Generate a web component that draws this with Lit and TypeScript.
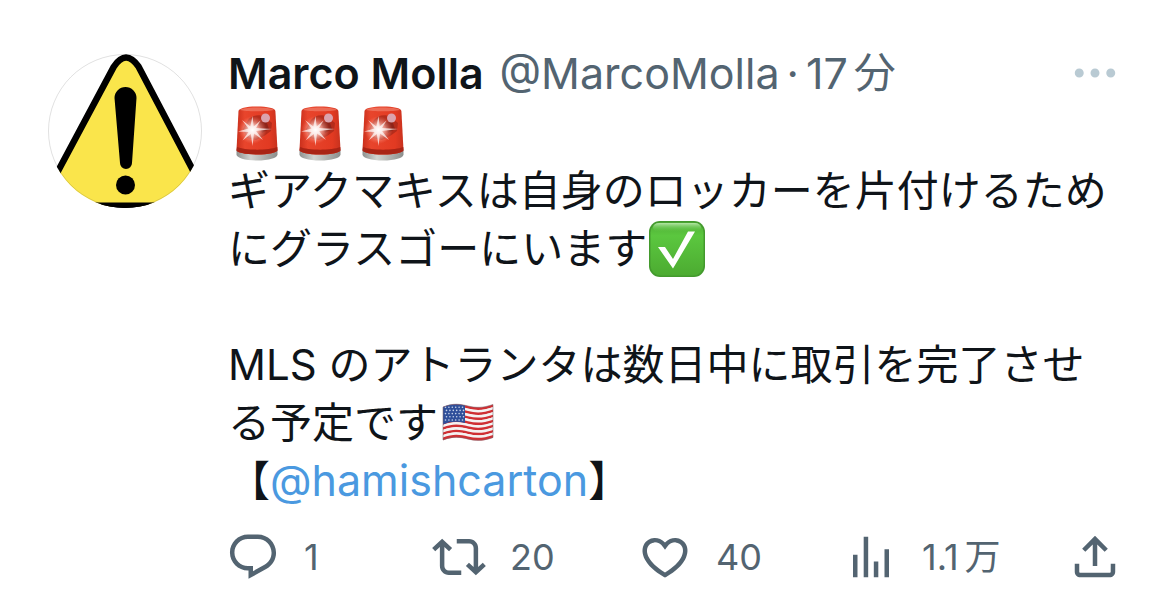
import { LitElement, html, css, svg } from "lit";
import { customElement, property } from "lit/decorators.js";

const ICONS: Record<string, string> = {
  more: "M3 12c0-1.1.9-2 2-2s2 .9 2 2-.9 2-2 2-2-.9-2-2zm9 2c1.1 0 2-.9 2-2s-.9-2-2-2-2 .9-2 2 .9 2 2 2zm7 0c1.1 0 2-.9 2-2s-.9-2-2-2-2 .9-2 2 .9 2 2 2z",
  reply:
    "M1.751 10c0-4.42 3.584-8 8.005-8h4.366c4.49 0 8.129 3.64 8.129 8.13 0 2.96-1.607 5.68-4.196 7.11l-8.054 4.46v-3.69h-.067c-4.49.1-8.183-3.51-8.183-8.01zm8.005-6c-3.317 0-6.005 2.69-6.005 6 0 3.37 2.77 6.08 6.138 6.01l.351-.01h1.761v2.3l5.087-2.81c1.951-1.08 3.163-3.13 3.163-5.36 0-3.39-2.744-6.13-6.129-6.13H9.756z",
  repost:
    "M4.5 3.88l4.432 4.14-1.364 1.46L5.5 7.55V16c0 1.1.896 2 2 2H13v2H7.5c-2.209 0-4-1.79-4-4V7.55L1.432 9.48.068 8.02 4.5 3.88zM16.5 6H11V4h5.5c2.209 0 4 1.79 4 4v8.45l2.068-1.93 1.364 1.46-4.432 4.14-4.432-4.14 1.364-1.46 2.068 1.93V8c0-1.1-.896-2-2-2z",
  like: "M16.697 5.5c-1.222-.06-2.679.51-3.89 2.16l-.805 1.09-.806-1.09C9.984 6.01 8.526 5.44 7.304 5.5c-1.243.07-2.349.78-2.91 1.91-.552 1.12-.633 2.78.479 4.82 1.074 1.97 3.257 4.27 7.129 6.61 3.87-2.34 6.052-4.64 7.126-6.61 1.111-2.04 1.03-3.7.477-4.82-.561-1.13-1.666-1.84-2.908-1.91zm4.187 7.69c-1.351 2.48-4.001 5.12-8.379 7.67l-.503.3-.504-.3c-4.379-2.55-7.029-5.19-8.382-7.67-1.36-2.5-1.41-4.86-.514-6.67.887-1.79 2.647-2.91 4.601-3.01 1.651-.09 3.368.56 4.798 2.01 1.429-1.45 3.146-2.1 4.796-2.01 1.954.1 3.714 1.22 4.601 3.01.896 1.81.846 4.17-.514 6.67z",
  views: "M8.75 21V3h2v18h-2zM18 21V8.5h2V21h-2zM4 21l.004-10h2L6 21H4zm9.248 0v-7h2v7h-2z",
  share:
    "M12 2.59l5.7 5.7-1.41 1.42L13 6.41V16h-2V6.41l-3.3 3.3-1.41-1.42L12 2.59zM21 15l-.02 3.51c0 1.38-1.12 2.49-2.5 2.49H5.5C4.11 21 3 19.88 3 18.5V15h2v3.5c0 .28.22.5.5.5h12.98c.28 0 .5-.22.5-.5L19 15h2z",
};

@customElement("post-icon")
class PostIcon extends LitElement {
  @property() name = "more";
  static styles = css`
    :host { display: block; width: 54px; height: 54px; flex: none; }
    svg { display: block; width: 100%; height: 100%; fill: currentColor; }
  `;
  render() {
    return html`<svg viewBox="0 0 24 24" aria-hidden="true"><path d=${ICONS[this.name]}></path></svg>`;
  }
}

/* Each emoji is drawn on a 63 x 58 cell, the size of one glyph in a line of text. */
const siren = svg`
  <defs>
    <linearGradient id="dome" x1="0" x2="1" y1="0" y2="0">
      <stop offset="0" stop-color="#c92f1c"/><stop offset=".2" stop-color="#e8452c"/>
      <stop offset=".8" stop-color="#e23a22"/><stop offset="1" stop-color="#c8321e"/>
    </linearGradient>
    <linearGradient id="base" x1="0" x2="1" y1="0" y2="0">
      <stop offset="0" stop-color="#8f918f"/><stop offset=".35" stop-color="#d2d4d1"/><stop offset="1" stop-color="#8c8e8c"/>
    </linearGradient>
    <radialGradient id="glow">
      <stop offset="0" stop-color="#fff"/><stop offset=".3" stop-color="#ffd9d2" stop-opacity=".85"/>
      <stop offset="1" stop-color="#ff8a78" stop-opacity="0"/>
    </radialGradient>
  </defs>
  <g transform="translate(0 -1)">
    <path d="M8.500 49v4.500c0 3.500 9 6 20.500 6s20.500-2.500 20.500-6V49z" fill="url(#base)"/>
    <path d="M10.500 10c.4-3 8-4.600 18.500-4.600S47 7 47.400 10L49.500 49c0 2.500-9 4.500-20.500 4.500S8.500 51.500 8.500 49z" fill="url(#dome)"/>
    <path d="M9 46c8 3.500 32 3.500 40.300 0l.2 3c0 2.500-9 4.500-20.500 4.500S8.500 51.500 8.500 49z" fill="#a92415"/>
    <path d="M12 9c5-3.200 29-3.200 34 0-6 1.700-28 1.700-34 0z" fill="#f18470" opacity=".65"/>
    <path d="M20 19c4-5 11-6 17-3l7 6-1 8-7 5-8 4-9-2-4-9z" fill="#a62819" opacity=".75"/>
    <path d="M30 22l8-3 3 9-7 4z" fill="#7f2118" opacity=".7"/>
    <circle cx="37.500" cy="17" r="4.500" fill="#dba3ad"/>
    <circle cx="24.500" cy="29" r="14" fill="url(#glow)"/>
    <path d="M24.500 15l1.200 10.500 6.800-6-4.500 7.500L44 28l-16 2 7 9-9-6.500L24.500 45l-1.700-12-8.300 6.500 6-8.500L10 30.500l10.500-3L14 19l8.300 6.500z" fill="#fff" opacity=".7"/>
  </g>`;

const check = svg`
  <defs>
    <linearGradient id="green" x1="0" x2="0" y1="0" y2="1">
      <stop offset="0" stop-color="#4fae35"/><stop offset=".25" stop-color="#5bc73f"/><stop offset="1" stop-color="#4cab31"/>
    </linearGradient>
    <linearGradient id="shine" x1="0" x2="0" y1="0" y2="1">
      <stop offset="0" stop-color="#b5e6a7"/><stop offset="1" stop-color="#5bc73f" stop-opacity="0"/>
    </linearGradient>
  </defs>
  <rect x="2" y="1" width="56" height="56" rx="11" fill="#439a2d"/>
  <rect x="3.500" y="2.500" width="53" height="53" rx="10" fill="url(#green)"/>
  <rect x="6" y="3" width="48" height="9" rx="6" fill="url(#shine)"/>
  <path d="M11 27h7l8 12 15-27.500h7L26 48.500z" fill="#fff"/>`;

const stripe = (i: number) => {
  const y = 12 + i * 2.54;
  return svg`<path d="M5 ${y}c10-4 17-3 25-1s15 2 25-1.500v2.700c-10 3.500-17 3.500-25 1.500s-15-3-25 1z" fill=${i % 2 ? "#f4f2f2" : "#cf2f33"}></path>`;
};
const stars = Array.from({ length: 30 }, (_, i) => svg`
  <circle cx=${7.5 + (i % 6) * 3.4 + (Math.floor(i / 6) % 2)} cy=${12.2 + Math.floor(i / 6) * 3.2} r=".8" fill="#c9d5ea"></circle>`);
const flag = svg`
  <g transform="translate(0 1)">
    ${Array.from({ length: 13 }, (_, i) => stripe(i))}
    <path d="M5 12c8-3.200 14-3.200 22-1.600v17.500c-8-1.600-14-1.600-22 1.600z" fill="#2f4f9a"/>
    ${stars}
    <path d="M5 12c10-4 17-3 25-1s15 2 25-1.500v33c-10 3.500-17 3.500-25 1.500s-15-3-25 1z" fill="none" stroke="#7b6670" stroke-opacity=".55"/>
  </g>`;

const ART: Record<string, unknown> = { siren, check, flag };

@customElement("emoji-glyph")
class EmojiGlyph extends LitElement {
  @property() name = "siren";
  @property() label = "";
  static styles = css`
    :host { display: inline-block; width: 63px; height: 58px; vertical-align: top; }
    svg { display: block; width: 100%; height: 100%; overflow: visible; }
  `;
  render() {
    return html`<svg viewBox="0 0 63 58" role="img" aria-label=${this.label}>${ART[this.name]}</svg>`;
  }
}

@customElement("app-root")
class AppRoot extends LitElement {
  /* Weight 370 keeps Inter close to regular and picks the DemiLight cut of the Japanese face. */
  static styles = css`
    :host {
      display: block;
      background: #fff;
      color: #0f1419;
      font-family: Inter, "Noto Sans CJK JP", sans-serif;
      font-size: 42px;
      font-weight: 370;
      line-height: 58px;
    }
    .post { display: flex; align-items: flex-start; gap: 26px; padding: 44px 48px 22px; }
    .avatar { flex: none; width: 154px; height: 154px; margin-top: 10px; }
    .main { flex: 1; min-width: 0; }
    .head { display: flex; align-items: center; height: 58px; color: #536471; font-size: 43px; font-weight: 400; white-space: nowrap; }
    .name { font-weight: 600; color: #0f1419; margin-right: 16px; }
    .dot { margin: 0 7px; }
    .when { display: flex; gap: 6px; }
    .unit { font-size: 42px; font-weight: 370; }
    a { color: inherit; text-decoration: none; }
    button {
      display: flex; align-items: center; gap: 24px; padding: 0; border: 0;
      background: none; color: #536471; font: inherit; cursor: pointer;
    }
    .more { margin-left: auto; color: #b9cad3; }
    .text { margin: 0 0 2px; }
    .mention { color: #4a99e0; font-size: 43px; font-weight: 400; line-height: 1; }
    .actions {
      display: grid; grid-template-columns: repeat(4, 1fr) 72px;
      margin: 20px 0 0 -2px; font-size: 36px; line-height: 54px;
    }
    .count { display: flex; gap: 6px; }
    .share { justify-self: end; }
  `;

  private action(name: string, label: string, count: string, unit = "") {
    return html`<button aria-label="${label} ${count}${unit}"><post-icon name=${name}></post-icon><span class="count">${count}${unit ? html`<span>${unit}</span>` : ""}</span></button>`;
  }

  render() {
    return html`
      <article class="post">
        <svg class="avatar" viewBox="0 0 154 154" role="img" aria-label="Marco Molla">
          <clipPath id="round"><circle cx="77" cy="77" r="77"></circle></clipPath>
          <g clip-path="url(#round)">
            <rect width="154" height="154" fill="#fff"></rect>
            <path d="M65.800 12.700Q78 -5.700 90.600 12.700L160.500 146Q163 153 156 153H-1Q-8 153 -5.400 146Z" fill="#fae54b" stroke="#000" stroke-width="6.500"></path>
            <rect y="148.500" width="154" height="6" fill="#000"></rect>
            <path d="M66.500 44a11 11 0 0 1 22 0L84 109a6 6 0 0 1-12 0z" fill="#000"></path>
            <circle cx="77.500" cy="131" r="9.500" fill="#000"></circle>
          </g>
          <circle cx="77" cy="77" r="76.500" fill="none" stroke="#000" stroke-opacity=".12"></circle>
        </svg>
        <div class="main">
          <header class="head">
            <a class="name" href="#">Marco Molla</a><a href="#">@MarcoMolla</a><span class="dot">·</span><time class="when">17<span class="unit">分</span></time>
            <button class="more" aria-label="More"><post-icon name="more"></post-icon></button>
          </header>
          <p class="text" lang="ja"><emoji-glyph name="siren" label="🚨"></emoji-glyph><emoji-glyph name="siren" label="🚨"></emoji-glyph><emoji-glyph name="siren" label="🚨"></emoji-glyph></p>
          <p class="text" lang="ja">ギアクマキスは自身のロッカーを片付けるためにグラスゴーにいます<emoji-glyph name="check" label="✅"></emoji-glyph><br><br>MLS のアトランタは数日中に取引を完了させる予定です<emoji-glyph name="flag" label="🇺🇸"></emoji-glyph><br>【<a class="mention" href="#">@hamishcarton</a>】</p>
          <footer class="actions">
            ${this.action("reply", "Reply", "1")}
            ${this.action("repost", "Repost", "20")}
            ${this.action("like", "Like", "40")}
            ${this.action("views", "Views", "1.1", "万")}
            <button class="share" aria-label="Share"><post-icon name="share"></post-icon></button>
          </footer>
        </div>
      </article>
    `;
  }
}
